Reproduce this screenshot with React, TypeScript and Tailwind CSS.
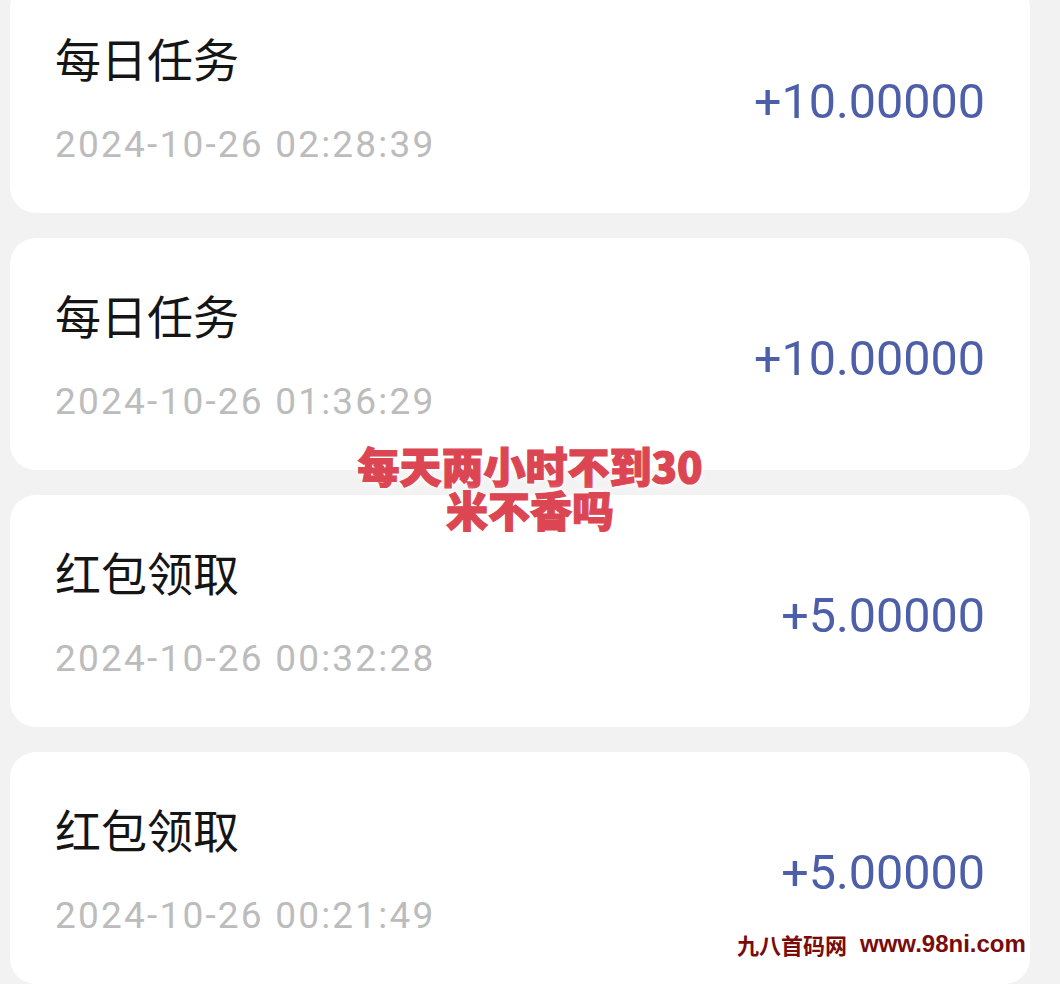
import React from "react";

const items = [
  { title: "每日任务", date: "2024-10-26 02:28:39", amount: "+10.00000" },
  { title: "每日任务", date: "2024-10-26 01:36:29", amount: "+10.00000" },
  { title: "红包领取", date: "2024-10-26 00:32:28", amount: "+5.00000" },
  { title: "红包领取", date: "2024-10-26 00:21:49", amount: "+5.00000" },
];

export default function App() {
  return (
    <div className="relative w-[1060px] h-[984px] overflow-hidden bg-[#f2f2f2]">
      <div className="flex flex-col gap-[25px] pl-[10px] pr-[30px] mt-[-19px]">
        {items.map((it, i) => (
          <div
            key={i}
            className="h-[232px] shrink-0 rounded-[26px] bg-white flex justify-between pl-[45px] pr-[45px]"
          >
            <div className="flex flex-col pt-[48px]">
              <div className="font-['Noto_Sans_CJK_SC','Noto_Sans',sans-serif] text-[46px] leading-[56px] text-[#151515]">
                {it.title}
              </div>
              <div className="mt-[38px] font-['Roboto','Noto_Sans',sans-serif] text-[37px] leading-[44px] tracking-[2.2px] text-[#bcbcbc]">
                {it.date}
              </div>
            </div>
            <div className="flex items-center pt-[10px]">
              <div className="font-['Roboto','Noto_Sans',sans-serif] text-[48.5px] leading-[56px] text-[#4d5fa9]">
                {it.amount}
              </div>
            </div>
          </div>
        ))}
      </div>

      <div className="absolute inset-x-0 top-[443px] flex flex-col items-center font-['Noto_Sans_CJK_SC','Noto_Sans',sans-serif] text-[42px] leading-[44px] font-black text-[#dc4652] [-webkit-text-stroke:1.2px_#dc4652] [text-shadow:0_0_4px_#ffffff,0_0_8px_#ffffff]">
        <div>每天两小时不到30</div>
        <div>米不香吗</div>
      </div>

      <div className="absolute left-[737px] top-[929px] flex items-center gap-[13px] text-[#7a0b0b] font-bold leading-[30px]">
        <span className="font-['Noto_Sans_CJK_SC','Noto_Sans',sans-serif] text-[22px]">九八首码网</span>
        <span className="font-['Liberation_Sans',Arial,sans-serif] text-[24px]">www.98ni.com</span>
      </div>
    </div>
  );
}
